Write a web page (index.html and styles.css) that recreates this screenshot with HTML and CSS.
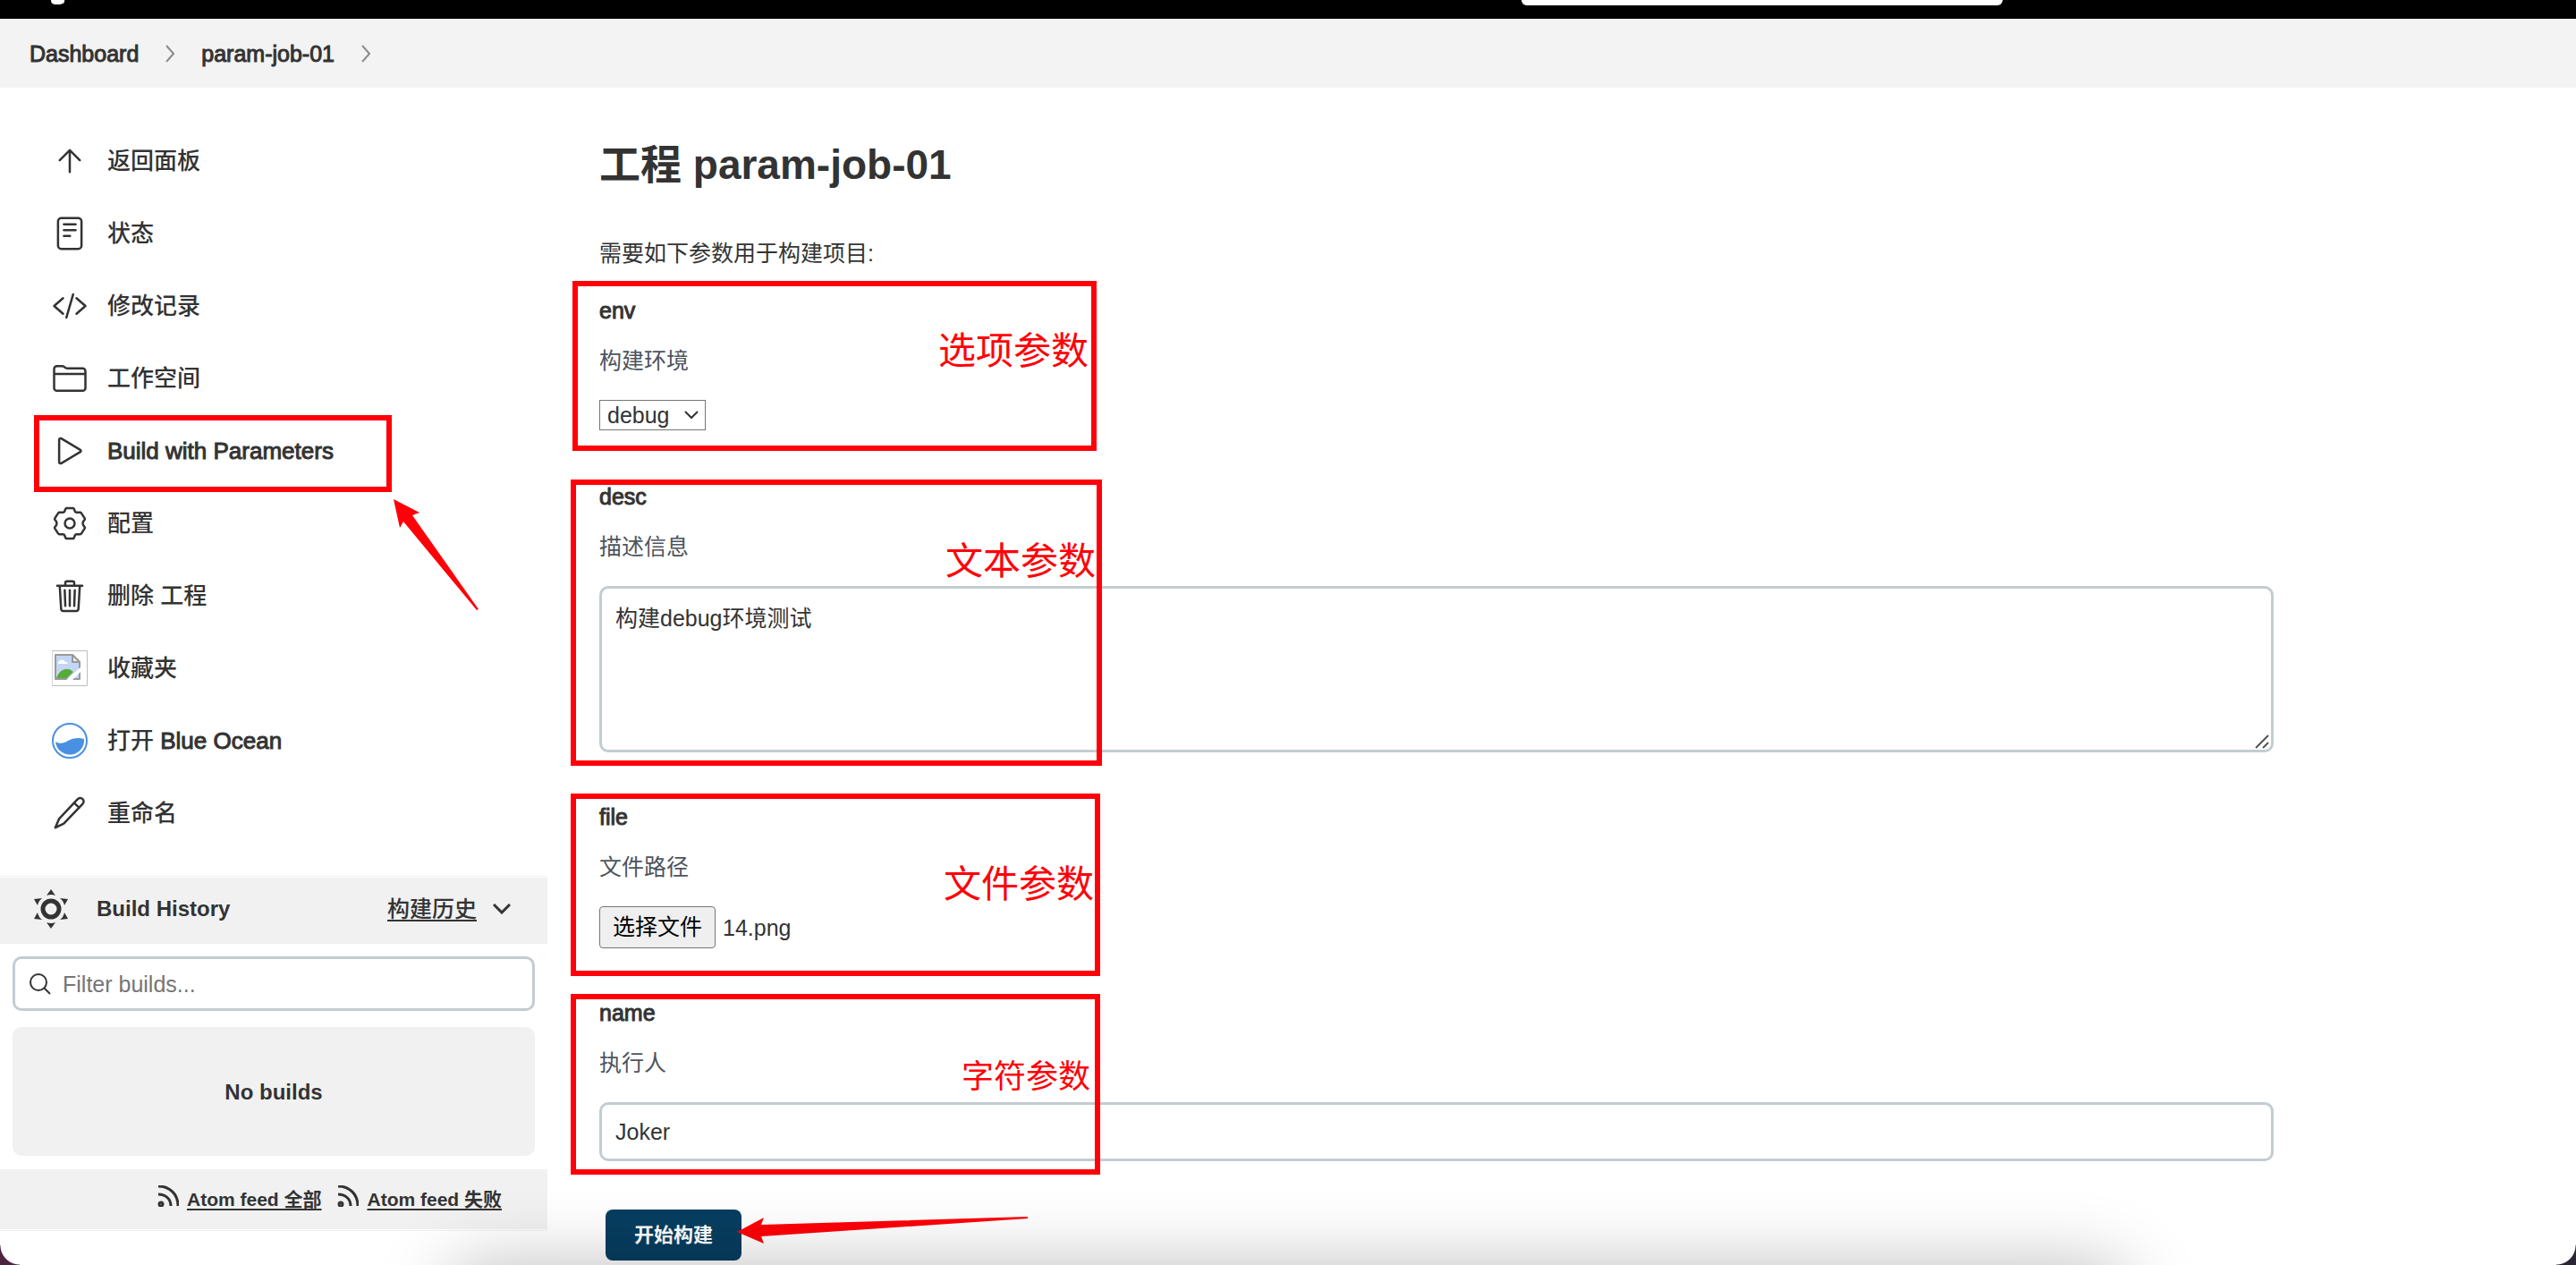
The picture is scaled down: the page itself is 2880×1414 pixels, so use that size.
FILE: index.html
```html
<!DOCTYPE html>
<html lang="zh-CN">
<head>
<meta charset="utf-8">
<title>param-job-01 [Jenkins]</title>
<link rel="stylesheet" href="styles.css">
</head>
<body>
<header class="topbar">
  <svg class="topbar-logo" viewBox="0 0 16 6" aria-hidden="true"><path d="M0 0h15c1 3-2 5-8 5S0 3 0 0z"/></svg>
  <input class="topbar-search" type="search" aria-label="搜索">
</header>

<nav class="breadcrumbs" aria-label="Breadcrumb">
  <a class="medium" href="#">Dashboard</a>
  <svg class="crumb-sep" viewBox="0 0 10 20"><path d="M1 1l8 9-8 9"/></svg>
  <a class="medium" href="#">param-job-01</a>
  <svg class="crumb-sep" viewBox="0 0 10 20"><path d="M1 1l8 9-8 9"/></svg>
</nav>

<div class="page">
  <aside class="sidebar">
    <nav class="tasks">
      <a class="task" href="#"><svg class="icon" viewBox="0 0 512 512"><path d="M112 244l144-144 144 144M256 120v292"/></svg>返回面板</a>
      <a class="task" href="#"><svg class="icon" viewBox="0 0 512 512"><rect x="88" y="36" width="336" height="440" rx="48"/><path d="M172 124h168M172 208h168M172 292h88"/></svg>状态</a>
      <a class="task" href="#"><svg class="icon" viewBox="0 0 512 512"><path d="M160 368L32 256l128-112M352 368l128-112-128-112M304 90l-96 332"/></svg>修改记录</a>
      <a class="task" href="#"><svg class="icon" viewBox="0 0 512 512"><path d="M440 432H72a40 40 0 01-40-40V120a40 40 0 0140-40h75.890a40 40 0 0122.190 6.720l27.840 18.560a40 40 0 0022.190 6.720H440a40 40 0 0140 40v240a40 40 0 01-40 40zM32 192h448"/></svg>工作空间</a>
      <a class="task" href="#"><svg class="icon" viewBox="0 0 512 512"><path d="M104 95v322c0 17 17 24 31 16l272-163c12-7 12-21 0-28L135 79c-14-8-31-1-31 16z"/></svg><span class="medium">Build with Parameters</span>
        <span class="mark mark-task"></span>
        <svg class="arrow arrow-task" viewBox="0 0 96 124"><path d="M0 0l29 15-8 3 74 105-2 1-82-99-4 7z"/></svg>
      </a>
      <a class="task" href="#"><svg class="icon" viewBox="0 0 512 512"><circle cx="256" cy="256" r="70"/><path d="M208 38h96q8 0 12 10l14 36q6 16 22 16h52q12 0 18 10l48 74q6 10-2 20l-20 26q-12 26 0 52l20 26q8 10 2 20l-48 74q-6 10-18 10h-52q-16 0-22 16l-14 36q-4 10-12 10h-96q-8 0-12-10l-14-36q-6-16-22-16h-52q-12 0-18-10l-48-74q-6-10 2-20l20-26q12-26 0-52l-20-26q-8-10-2-20l48-74q6-10 18-10h52q16 0 22-16l14-36q4-10 12-10z"/></svg>配置</a>
      <a class="task" href="#"><svg class="icon" viewBox="0 0 512 512"><path d="M112 112l20 330c1 18 14 32 32 32h184c18 0 31-14 32-32l20-330M76 112h360M192 112V72a24 24 0 0124-24h80a24 24 0 0124 24v40M256 176v224M184 176l8 224M328 176l-8 224"/></svg>删除 工程</a>
      <a class="task" href="#"><svg class="icon icon-plain" viewBox="0 0 40 40"><path fill="#fff" stroke="#bdbdbd" d="M.5.5h39v39H.5z"/><path fill="#c5d6f5" stroke="#9a9a9a" stroke-width="2" d="M4 5h19l8 8v19H4z"/><path fill="#fff" d="M7 14c1-4 6-5 8-1 3 0 3 2 2 2H7z"/><path fill="#56ac38" d="M5 31c4-11 13-13 19-7l-7 7z"/><path fill="#eee" stroke="#9a9a9a" stroke-width="2" d="M23 5v8h8z"/><path fill="#fff" d="M33 18v5L22 34h-7z"/></svg>收藏夹</a>
      <a class="task" href="#"><svg class="icon icon-plain" viewBox="0 0 40 40"><circle cx="20" cy="20" r="19" fill="#fff" stroke="#4a90e2" stroke-width="2"/><path fill="#4a90e2" d="M4 21c5 3 9 2 14-1s12-4 18-2a16 16 0 01-32 3z"/></svg><span>打开 <span class="medium">Blue Ocean</span></span></a>
      <a class="task" href="#"><svg class="icon" viewBox="0 0 512 512"><path d="M364 60c28-28 56-26 76-6s22 48-6 76L170 404 50 462l52-124zM316 108l76 70"/></svg>重命名</a>
    </nav>

    <section class="history">
      <div class="history-head">
        <svg class="history-icon" viewBox="0 0 38 44"><circle cx="19" cy="22" r="9"/><path d="M19 0l5 7q-5-2-10 0zM19 44l5-7q-5 2-10 0zM0 11l9-1q-4 3-5 8zM38 11l-9-1q4 3 5 8zM0 33l9 1q-4-3-5-8zM38 33l-9 1q4-3 5-8z"/></svg>
        <h2 class="history-title">Build History</h2>
        <a class="history-link" href="#">构建历史</a>
        <svg class="history-chevron" viewBox="0 0 20 12"><path d="M1 1l9 9 9-9"/></svg>
      </div>
      <label class="filter">
        <svg class="filter-icon" viewBox="0 0 24 24"><circle cx="10" cy="10" r="9"/><path d="M16 16l7 7"/></svg>
        <input class="filter-input" type="text" placeholder="Filter builds..." aria-label="Filter builds">
      </label>
      <p class="no-builds">No builds</p>
      <div class="feeds">
        <a class="feed" href="#"><svg class="feed-icon" viewBox="0 0 24 24"><circle cx="4" cy="21" r="2"/><path d="M1 10c8 0 14 5 14 13M1 1c13 0 22 9 22 22"/></svg><span>Atom feed 全部</span></a>
        <a class="feed" href="#"><svg class="feed-icon" viewBox="0 0 24 24"><circle cx="4" cy="21" r="2"/><path d="M1 10c8 0 14 5 14 13M1 1c13 0 22 9 22 22"/></svg><span>Atom feed 失败</span></a>
      </div>
    </section>
  </aside>

  <main class="content">
    <h1 class="title">工程 param-job-01</h1>
    <p class="intro">需要如下参数用于构建项目:</p>
    <form class="params">
      <div class="param">
        <label class="param-name medium" for="env">env</label>
        <p class="param-desc">构建环境</p>
        <div class="select-row">
          <span class="select-wrap">
            <select class="select" id="env"><option>debug</option></select>
            <svg class="select-chevron" viewBox="0 0 16 10"><path d="M1 1l7 7 7-7"/></svg>
          </span>
        </div>
        <span class="mark mark-env"></span>
        <span class="note note-env">选项参数</span>
      </div>
      <div class="param">
        <label class="param-name medium" for="desc">desc</label>
        <p class="param-desc">描述信息</p>
        <div class="area-wrap">
          <textarea class="field area" id="desc">构建debug环境测试</textarea>
          <svg class="grip" viewBox="0 0 16 16"><path d="M1 15L15 1M9 15l6-6"/></svg>
        </div>
        <span class="mark mark-desc"></span>
        <span class="note note-desc">文本参数</span>
      </div>
      <div class="param">
        <label class="param-name medium" for="file">file</label>
        <p class="param-desc">文件路径</p>
        <div class="file">
          <input class="file-input" type="file" id="file">
          <label class="file-button" for="file">选择文件</label>
          <span>14.png</span>
        </div>
        <span class="mark mark-file"></span>
        <span class="note note-file">文件参数</span>
      </div>
      <div class="param">
        <label class="param-name medium" for="name">name</label>
        <p class="param-desc">执行人</p>
        <input class="field line" type="text" id="name" value="Joker">
        <span class="mark mark-name"></span>
        <span class="note note-name">字符参数</span>
      </div>
      <div class="actions">
        <button class="submit" type="button">开始构建</button>
        <svg class="arrow arrow-submit" viewBox="0 0 326 30"><path d="M0 17L30 1l-3 8L325 0v2L27 22l3 8z"/></svg>
      </div>
    </form>
  </main>
</div>
<div class="dock-shadow"></div>
<div class="corner corner-left"></div>
<div class="corner corner-right"></div>
</body>
</html>
```
FILE: styles.css
```css
:root {
  --text: #333;
  --muted: #4d545d;
  --panel: #f1f1f1;
  --border: #c3ccd1;
  --red: #ff0008;
}

* { box-sizing: border-box; }

body {
  margin: 0;
  background: #fff;
  color: var(--text);
  font: 25px/36px "Liberation Sans", "Noto Sans CJK SC", sans-serif;
}

h1, h2, p { margin: 0; }
a { color: inherit; text-decoration: none; }
svg { fill: none; stroke: currentColor; flex: none; }
input, select, textarea, button { font: inherit; color: inherit; }

/* Medium weight for Latin labels, between regular and bold */
.medium { -webkit-text-stroke: 1px; }

/* Top bar */
.topbar {
  display: flex;
  align-items: flex-start;
  justify-content: space-between;
  height: 21px;
  padding: 0 641px 0 57px;
  background: #000;
  overflow: hidden;
}
.topbar-logo { width: 16px; height: 6px; fill: #fff; stroke: none; }
.topbar-search {
  width: 538px;
  height: 6px;
  padding: 0;
  border: 0;
  border-radius: 0 0 10px 10px;
  background: #fff;
}

.breadcrumbs {
  display: flex;
  align-items: center;
  gap: 30px;
  height: 77px;
  padding: 0 33px;
  background: #f3f3f3;
}
.crumb-sep { width: 10px; height: 20px; color: #8c8c8c; stroke-width: 2; }

.page { display: flex; align-items: flex-start; }

/* Sidebar */
.sidebar { flex: 0 0 612px; padding-top: 41px; }
.task {
  position: relative;
  display: flex;
  align-items: center;
  gap: 22px;
  height: 81px;
  padding-left: 58px;
  font-size: 26px;
  font-weight: 500;
}
.icon { width: 40px; height: 40px; stroke-width: 32; stroke-linecap: round; stroke-linejoin: round; }
.icon-plain { stroke: none; stroke-width: 1; }

.history {
  margin-top: 30px;
  border-top: 1px solid var(--panel);
  border-bottom: 1px solid var(--panel);
  padding: 1px 0;
}
.history-head {
  display: flex;
  align-items: center;
  height: 74px;
  padding: 0 41px 4px 38px;
  background: var(--panel);
}
.history-icon { width: 38px; height: 44px; margin-right: 32px; }
.history-icon circle { stroke-width: 5; }
.history-icon path { fill: currentColor; stroke: none; }
.history-title { flex: 1; font-size: 24px; }
.history-link { font-weight: 500; text-decoration: underline; text-underline-offset: 3px; }
.history-chevron { width: 20px; height: 12px; margin-left: 18px; stroke-width: 3; }

.filter {
  display: flex;
  align-items: center;
  gap: 13px;
  height: 61px;
  margin: 14px 14px 18px;
  padding: 0 16px;
  border: 3px solid var(--border);
  border-radius: 10px;
}
.filter-icon { width: 24px; height: 24px; stroke-width: 2; }
.filter-input { flex: 1; min-width: 0; padding: 0; border: 0; background: none; outline: 0; }
.filter-input::placeholder { color: #757575; }

.no-builds {
  margin: 0 14px 15px;
  padding: 55px 0 53px;
  border-radius: 10px;
  background: var(--panel);
  font-size: 24px;
  font-weight: 700;
  text-align: center;
}

.feeds {
  display: flex;
  align-items: center;
  justify-content: flex-end;
  gap: 18px;
  height: 67px;
  padding-right: 51px;
  background: var(--panel);
  font-size: 21px;
  font-weight: 700;
}
.feed { display: flex; align-items: center; gap: 9px; text-decoration: underline; text-underline-offset: 3px; }
.feed-icon { width: 24px; height: 24px; margin-bottom: 8px; stroke-width: 3; }

/* Parameters form */
.content { flex: 1; min-width: 0; padding: 58px 338px 0 58px; }
.title { font-size: 46px; line-height: 56px; }
.intro { margin-top: 53px; }
.params { margin-top: 28px; }
.param { position: relative; margin-bottom: 54px; }
.param-name { display: block; }
.param-desc { margin: 20px 0 26px; color: var(--muted); }

.select-row { height: 36px; }
.select-wrap { position: relative; display: flex; width: 119px; height: 34px; }
.select {
  appearance: none;
  width: 100%;
  padding: 0 8px;
  border: 1px solid #767676;
  border-radius: 0;
  background: #fff;
  line-height: 32px;
}
.select-chevron { position: absolute; right: 8px; top: 12px; width: 16px; height: 10px; stroke-width: 2; }

.field {
  display: block;
  width: 100%;
  padding: 15px;
  border: 3px solid var(--border);
  border-radius: 10px;
  background: #fff;
}
.area-wrap { position: relative; }
.area { height: 186px; resize: none; }
.grip { position: absolute; right: 5px; bottom: 4px; width: 16px; height: 16px; color: #555; stroke-width: 2; }
.line { height: 66px; padding: 0 15px; }

.file { display: flex; align-items: center; gap: 8px; }
.file-input { position: absolute; width: 1px; height: 1px; opacity: 0; }
.file-button {
  height: 47px;
  padding: 0 14px;
  border: 1px solid #767676;
  border-radius: 4px;
  background: #efefef;
  color: #000;
  line-height: 45px;
}

.actions { position: relative; padding-left: 7px; }
.submit {
  display: block;
  height: 57px;
  padding: 0 32px;
  border: 0;
  border-radius: 8px;
  background: #073e60;
  color: #fff;
  font-size: 22px;
  font-weight: 700;
}

/* Red annotations laid over the page */
.mark { position: absolute; border: 6px solid var(--red); pointer-events: none; }
.note { position: absolute; color: var(--red); font-size: 42px; line-height: 56px; white-space: nowrap; }
.arrow { position: absolute; fill: var(--red); stroke: none; }
.mark-task { left: 38px; top: 1px; width: 400px; height: 86px; }
.arrow-task { left: 440px; top: 95px; width: 96px; height: 124px; }
.mark-env { left: -30px; top: -15px; width: 586px; height: 190px; }
.note-env { left: 379px; top: 36px; }
.mark-desc { left: -32px; top: -1px; width: 594px; height: 320px; }
.note-desc { left: 387px; top: 63px; }
.mark-file { left: -32px; top: -8px; width: 592px; height: 204px; }
.note-file { left: 385px; top: 66px; }
.mark-name { left: -32px; top: -3px; width: 592px; height: 202px; }
.note-name { left: 405px; top: 62px; font-size: 36px; }
.arrow-submit { left: 154px; top: 8px; width: 326px; height: 30px; }

/* Desktop showing round the window's lower edge */
.dock-shadow {
  position: fixed;
  left: 500px;
  right: 500px;
  bottom: -100px;
  height: 100px;
  border-radius: 40px;
  box-shadow: 0 0 80px rgba(0, 0, 0, .26);
  pointer-events: none;
}
.corner { position: fixed; bottom: 0; width: 22px; height: 22px; }
.corner-left { left: 0; background: radial-gradient(circle at 100% 0, transparent 21px, #4f2440 22px); }
.corner-right { right: 0; background: radial-gradient(circle at 0 0, transparent 21px, #2b2634 22px); }
```
